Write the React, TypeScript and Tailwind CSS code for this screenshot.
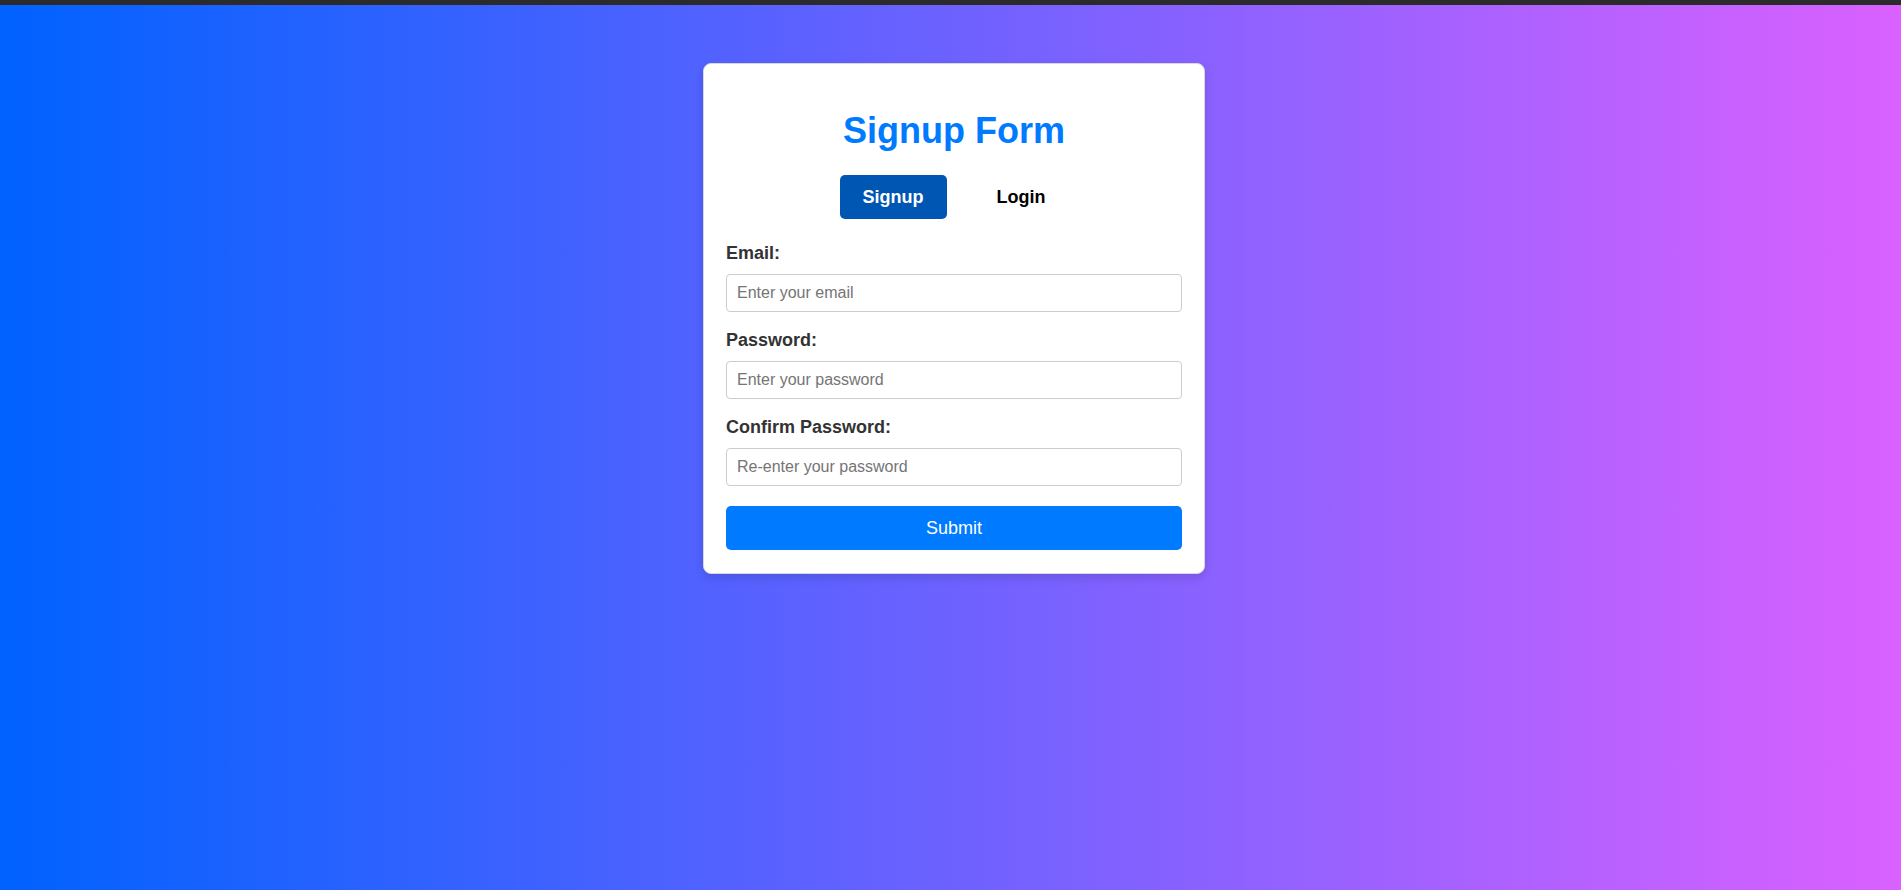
import { useState } from 'react';

const font = { fontFamily: '"Liberation Sans", Arial, sans-serif' };

const Field = ({
  label,
  type,
  placeholder,
  last,
}: {
  label: string;
  type: string;
  placeholder: string;
  last?: boolean;
}) => {
  const [value, setValue] = useState('');
  return (
    <div className={last ? 'mb-[20px]' : 'mb-[18px]'}>
      <label className="block mb-[10px] text-[18px] leading-[21px] font-bold text-[#333]">{label}</label>
      <input
        type={type}
        value={value}
        placeholder={placeholder}
        onChange={(e) => setValue(e.target.value)}
        className="block w-full h-[38px] px-[10px] text-[16px] text-[#333] placeholder-[#757575] bg-white border border-[#ccc] rounded-[4px] outline-none"
      />
    </div>
  );
};

export default function App() {
  const [tab, setTab] = useState<'signup' | 'login'>('signup');

  return (
    <div className="h-screen flex flex-col" style={font}>
      <div className="h-[5px] bg-[#2b2b2b] shrink-0" />
      <div className="flex-1 bg-[linear-gradient(to_right,#0062ff,#da61ff)] flex justify-center items-start pl-[7px]">
        <div className="mt-[58px] w-[502px] bg-white border border-[#d8d8e0] rounded-[8px] px-[22px] pt-[22px] pb-[23px] shadow-[0_4px_10px_rgba(0,0,0,0.12)]">
          <h2 className="mt-[24px] mb-[24px] text-center text-[36px] leading-[41px] font-bold text-[#007bff]">
            Signup Form
          </h2>

          <div className="flex justify-center gap-[27px] mb-[24px]">
            <button
              onClick={() => setTab('signup')}
              className={`h-[44px] px-[23px] rounded-[5px] text-[18px] leading-[21px] font-bold ${
                tab === 'signup' ? 'bg-[#0056b3] text-white' : 'bg-transparent text-black'
              }`}
            >
              Signup
            </button>
            <button
              onClick={() => setTab('login')}
              className={`h-[44px] px-[23px] rounded-[5px] text-[18px] leading-[21px] font-bold ${
                tab === 'login' ? 'bg-[#0056b3] text-white' : 'bg-transparent text-black'
              }`}
            >
              Login
            </button>
          </div>

          <form onSubmit={(e) => e.preventDefault()}>
            <Field label="Email:" type="email" placeholder="Enter your email" />
            <Field label="Password:" type="password" placeholder="Enter your password" />
            <Field label="Confirm Password:" type="password" placeholder="Re-enter your password" last />
            <button
              type="submit"
              className="block w-full h-[44px] bg-[#007bff] text-white text-[18px] rounded-[5px]"
            >
              Submit
            </button>
          </form>
        </div>
      </div>
    </div>
  );
}
